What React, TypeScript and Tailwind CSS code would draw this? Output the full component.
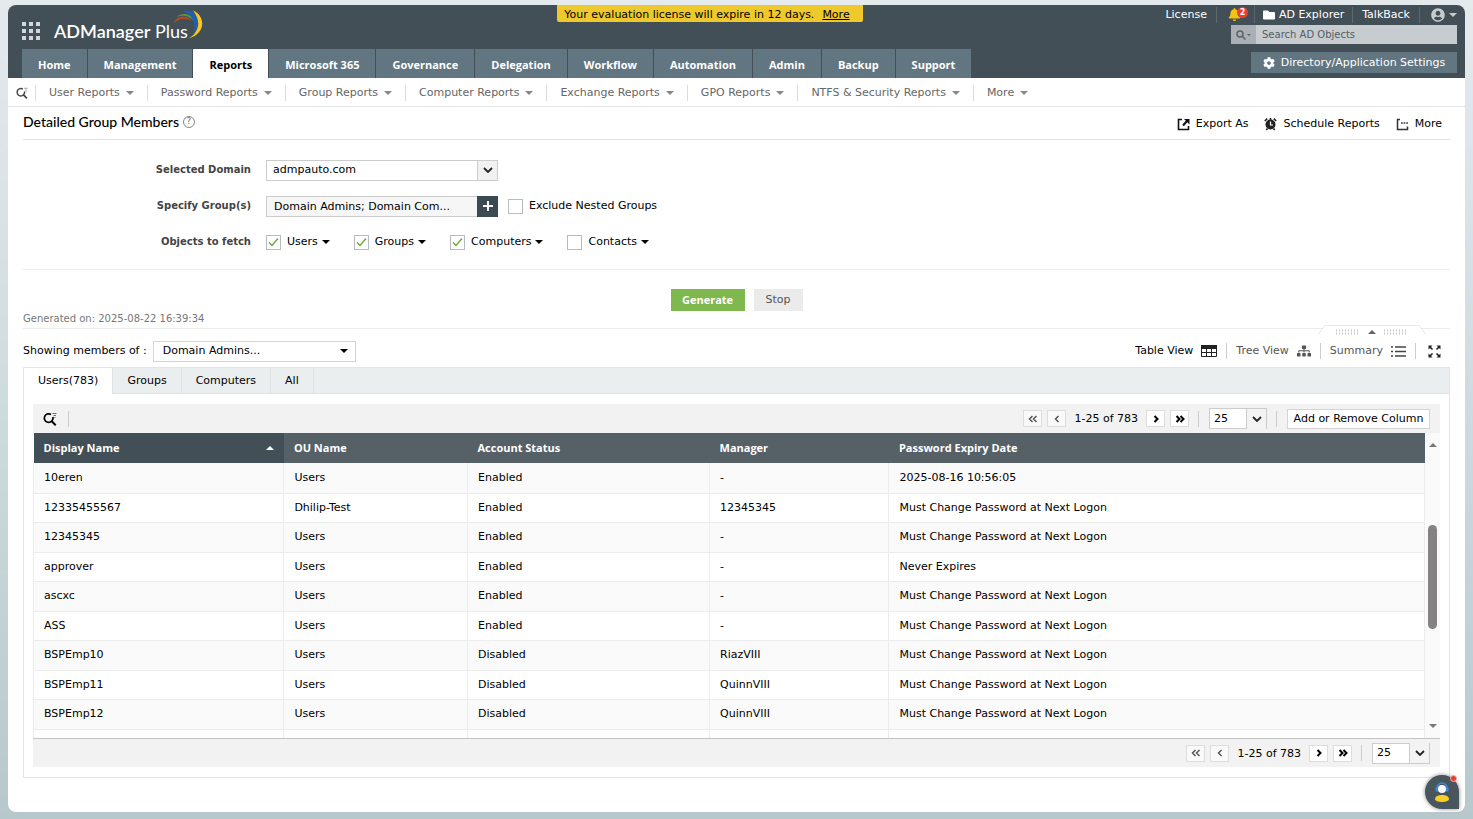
import { ReactNode } from "react";
import { FaBell, FaCog, FaFolder, FaSitemap, FaUserCircle } from "react-icons/fa";

const navTabs = [
  "Home",
  "Management",
  "Reports",
  "Microsoft 365",
  "Governance",
  "Delegation",
  "Workflow",
  "Automation",
  "Admin",
  "Backup",
  "Support",
];

const reportMenus = [
  "User Reports",
  "Password Reports",
  "Group Reports",
  "Computer Reports",
  "Exchange Reports",
  "GPO Reports",
  "NTFS & Security Reports",
  "More",
];

const objectTypes = [
  { name: "Users", checked: true },
  { name: "Groups", checked: true },
  { name: "Computers", checked: true },
  { name: "Contacts", checked: false },
];

const mustChange = "Must Change Password at Next Logon";

const rows = [
  ["10eren", "Users", "Enabled", "-", "2025-08-16 10:56:05"],
  ["12335455567", "Dhilip-Test", "Enabled", "12345345", mustChange],
  ["12345345", "Users", "Enabled", "-", mustChange],
  ["approver", "Users", "Enabled", "-", "Never Expires"],
  ["ascxc", "Users", "Enabled", "-", mustChange],
  ["ASS", "Users", "Enabled", "-", mustChange],
  ["BSPEmp10", "Users", "Disabled", "RiazVIII", mustChange],
  ["BSPEmp11", "Users", "Disabled", "QuinnVIII", mustChange],
  ["BSPEmp12", "Users", "Disabled", "QuinnVIII", mustChange],
];

function Caret({ className = "" }: { className?: string }) {
  return (
    <svg viewBox="0 0 8 4" className={`h-1 w-2 shrink-0 fill-current ${className}`} aria-hidden="true">
      <path d="M0 0h8L4 4z" />
    </svg>
  );
}

function Chevron() {
  return (
    <svg viewBox="0 0 10 6" className="h-1.5 w-2.5" fill="none" stroke="#222" strokeWidth="1.8" aria-hidden="true">
      <path d="M1 1l4 4 4-4" />
    </svg>
  );
}

function SearchFilterIcon({ className = "" }: { className?: string }) {
  return (
    <svg viewBox="0 0 14 14" className={className} fill="none" stroke="currentColor" aria-hidden="true">
      <path d="M8 2.500A4.300 4.300 0 1 0 9.700 7.500Q10.200 6.500 9.900 5" strokeWidth="1.700" />
      <path d="M8.500 9l4.200 4.200" strokeWidth="2" />
      <path d="M9.500 1.500h4M10.500 3.500h2.500M11.500 5.500h1" strokeWidth="1" opacity=".55" />
    </svg>
  );
}

function Logo() {
  return (
    <div className="relative flex h-full w-[149px] items-end pb-1.5">
      <span className="font-[Lato,sans-serif] text-[18px] leading-6 text-white">
        <span className="font-semibold">ADManager</span> Plus
      </span>
      <svg viewBox="0 0 30 31" className="absolute top-1 right-0 h-[31px] w-[30px]" aria-hidden="true">
        <path d="M0 14.500C4 6 14 6 18.500 12 13 8.500 6 8.500 0 14.500z" fill="#c0481f" />
        <path d="M3.500 8c7-6 17-3 19.500 7C18.500 8 12 5 3.500 8z" fill="#5d9732" />
        <path d="M9.500 2C18 0 26 6 25.500 14c-.5 5-2 7-4.500 10C23.500 14 19 5 9.500 2z" fill="#1d5fb8" />
        <path d="M20 1.500C33 7 33 25 15.500 29.500 27 23 28 11 20 1.500z" fill="#fbc71b" />
      </svg>
    </div>
  );
}

function HeaderLinks() {
  return (
    <div className="flex h-[18px] items-center pt-px text-white">
      <a href="#license" className="border-r border-[#5d676d] pr-[9px]">
        License
      </a>
      <button type="button" aria-label="Notifications" className="relative flex h-full w-[38px] items-center border-r border-[#5d676d] pl-[11px]">
        <FaBell className="size-[13px] text-[#f1c40f]" />
        <span className="absolute top-px right-1.5 flex size-[11px] items-center justify-center rounded-full bg-[#ee3b33] text-[8px] font-bold">
          2
        </span>
      </button>
      <a href="#explorer" className="flex items-center gap-1 border-r border-[#5d676d] px-2">
        <FaFolder className="size-3" />
        AD Explorer
      </a>
      <a href="#talkback" className="border-r border-[#5d676d] px-[9px]">
        TalkBack
      </a>
      <button type="button" aria-label="Account" className="flex items-center gap-1 pl-[11px] text-[#c6cbce]">
        <FaUserCircle className="size-3.5" />
        <Caret />
      </button>
    </div>
  );
}

function Header() {
  return (
    <header className="rounded-t-[8px] bg-[#434f57]">
      <div className="flex h-11 items-start">
        <div className="flex h-full w-[549px] shrink-0 items-center pl-3.5">
          <button type="button" aria-label="Apps" className="mt-2 mr-3.5 grid grid-cols-3 gap-[3px]">
            {Array.from({ length: 9 }, (_, i) => (
              <span key={i} className="size-1 bg-[#d3d7d9]" />
            ))}
          </button>
          <Logo />
        </div>
        <div className="flex h-[17px] w-[306px] shrink-0 items-center justify-center gap-2 rounded-b-[2px] bg-[#efc82b] pt-0.5 pr-1.5 text-black">
          Your evaluation license will expire in 12 days.
          <a href="#more" className="underline">
            More
          </a>
        </div>
        <div className="ml-auto flex flex-col items-end pr-2">
          <HeaderLinks />
          <form className="mt-0.5 flex h-[19px] w-[226px]">
            <button type="button" aria-label="Search" className="flex w-[25px] items-center justify-center gap-px bg-[#a9afb4] text-[#5b646b]">
              <svg viewBox="0 0 10 10" className="size-2.5" fill="none" stroke="currentColor" strokeWidth="1.500">
                <circle cx="4" cy="4" r="3" />
                <path d="M6.200 6.200L9.500 9.500" />
              </svg>
              <svg viewBox="0 0 4 2" className="h-0.5 w-1 fill-current">
                <path d="M0 0h4L2 2z" />
              </svg>
            </button>
            <input
              type="text"
              aria-label="Search AD Objects"
              placeholder="Search AD Objects"
              className="min-w-0 flex-1 bg-[#c7ccd0] px-1.5 text-[10px] placeholder:text-[#555e64]"
            />
          </form>
        </div>
      </div>
      <div className="flex h-[29px] justify-between pr-2 pl-3.5">
        <nav className="flex gap-px font-['Open_Sans',sans-serif] text-[11px] font-bold">
          {navTabs.map((tab) => (
            <a
              key={tab}
              href="#tab"
              className={`flex items-center px-4 pt-0.5 ${tab === "Reports" ? "bg-white text-black" : "bg-[#627681] text-white"}`}
            >
              {tab}
            </a>
          ))}
        </nav>
        <button type="button" className="mt-[3px] flex h-[21px] w-[206px] items-center justify-center gap-1.5 bg-[#627681] text-white">
          <FaCog className="size-3" />
          Directory/Application Settings
        </button>
      </div>
    </header>
  );
}

function ReportMenu() {
  return (
    <nav className="flex h-[29px] items-center border-b border-[#e6e6e6] pt-0.5 text-[#666]">
      <button type="button" aria-label="Search reports" className="flex h-4 w-[28px] items-center border-r border-[#ddd] pl-2 text-[#444]">
        <SearchFilterIcon className="size-3" />
      </button>
      {reportMenus.map((menu) => (
        <button
          key={menu}
          type="button"
          className="flex h-4 items-center gap-1.5 border-r border-[#ddd] px-[13px] last:border-0"
        >
          {menu}
          <Caret className="text-[#888]" />
        </button>
      ))}
    </nav>
  );
}

function TitleBar() {
  return (
    <div className="mx-[15px] flex h-[33px] items-center justify-between border-b border-[#e2e2e2]">
      <div className="flex items-center gap-1 pb-0.5">
        <h1 className="font-[Lato,sans-serif] text-sm font-medium text-black">Detailed Group Members</h1>
        <button type="button" aria-label="Help" className="flex size-3 items-center justify-center rounded-full border border-[#888] text-[8px] text-[#666]">
          ?
        </button>
      </div>
      <div className="flex items-center gap-4 pt-0.5 pr-2">
        <button type="button" className="flex items-center gap-1.5">
          <svg viewBox="0 0 13 13" className="size-[13px]" fill="none" stroke="#111" strokeWidth="1.600">
            <path d="M5 1.500H1.500v10h10V8" />
            <path d="M6 7.500L10 3" strokeWidth="2" />
            <path d="M7 1h5.500v5.500z" fill="#111" stroke="none" />
          </svg>
          Export As
        </button>
        <button type="button" className="flex items-center gap-1.5">
          <svg viewBox="0 0 13 14" className="h-3.5 w-[13px]">
            <circle cx="6.500" cy="7.500" r="5" fill="#222" />
            <path d="M.8 4l2.400-2.400M12.200 4L9.800 1.600M3.500 11.500L2.300 13M9.500 11.500l1.200 1.500M6.500 1v2" stroke="#222" strokeWidth="1.600" />
            <path d="M6.500 4.500V8H9" fill="none" stroke="#fff" strokeWidth="1.200" />
          </svg>
          Schedule Reports
        </button>
        <button type="button" className="flex items-center gap-1.5">
          <svg viewBox="0 0 13 13" className="size-[13px]" fill="none" stroke="#333" strokeWidth="1.500">
            <path d="M4 1.500H1.500v10H11.500V8.500" />
            <path d="M5 5h1.700M7.600 5h1.700M10.200 5h1.700" strokeWidth="1.700" />
          </svg>
          More
        </button>
      </div>
    </div>
  );
}

function Checkbox({ label, checked = false }: { label: string; checked?: boolean }) {
  return (
    <label className="flex items-center gap-1.5">
      <span className="grid size-[15px] place-items-center">
        <input
          type="checkbox"
          defaultChecked={checked}
          className="peer col-start-1 row-start-1 size-[15px] appearance-none border border-[#b5bdc1] bg-white"
        />
        <svg
          viewBox="0 0 11 10"
          className="pointer-events-none invisible col-start-1 row-start-1 h-2.5 w-[11px] peer-checked:visible"
          fill="none"
          stroke="#72ab3f"
          strokeWidth="1.500"
        >
          <path d="M1 5.500l3 3L10 1.500" />
        </svg>
      </span>
      {label}
    </label>
  );
}

function FormRow({ label, htmlFor, children }: { label: string; htmlFor?: string; children: ReactNode }) {
  return (
    <div className="flex h-9 items-center">
      <label htmlFor={htmlFor} className="w-[228px] text-right text-[10px] font-bold text-[#444]">
        {label}
      </label>
      <div className="ml-[15px] flex items-center">{children}</div>
    </div>
  );
}

function ReportForm() {
  return (
    <div className="mx-[15px] border-b border-[#ececec] pt-3 pb-[9px]">
      <FormRow label="Selected Domain" htmlFor="domain">
        <div className="relative h-[21px] w-[232px]">
          <select id="domain" className="h-full w-full appearance-none border border-[#ccc] bg-white pl-1.5">
            <option>admpauto.com</option>
          </select>
          <span className="pointer-events-none absolute inset-y-px right-px flex w-5 items-center justify-center border-l border-[#ccc] bg-[#f1f1f1]">
            <Chevron />
          </span>
        </div>
      </FormRow>
      <FormRow label="Specify Group(s)" htmlFor="groups">
        <input
          id="groups"
          type="text"
          readOnly
          value="Domain Admins; Domain Com..."
          className="h-[21px] w-[211px] border border-r-0 border-[#ccc] bg-[#f6f6f6] pl-[7px]"
        />
        <button type="button" aria-label="Add groups" className="mr-2.5 flex size-[21px] items-center justify-center bg-[#3c4a54]">
          <svg viewBox="0 0 10 10" className="size-2.5" stroke="#fff" strokeWidth="2">
            <path d="M5 0v10M0 5h10" />
          </svg>
        </button>
        <Checkbox label="Exclude Nested Groups" />
      </FormRow>
      <FormRow label="Objects to fetch">
        {objectTypes.map((type) => (
          <div key={type.name} className="mr-6 flex items-center gap-1">
            <Checkbox label={type.name} checked={type.checked} />
            <button type="button" aria-label={`${type.name} options`}>
              <Caret />
            </button>
          </div>
        ))}
      </FormRow>
    </div>
  );
}

function ViewSwitcher() {
  return (
    <div className="flex items-center pr-[9px] text-[#555]">
      <button type="button" className="flex items-center gap-2 pr-[9px] text-black">
        Table View
        <svg viewBox="0 0 16 12" className="h-3 w-4" fill="none" stroke="#222" strokeWidth="1">
          <path d="M.5.5h15v11H.5zM.5 7.500h15M5.500 3v9M10.500 3v9" />
          <path d="M0 0h16v4H0z" fill="#222" stroke="none" />
        </svg>
      </button>
      <button type="button" className="flex h-4 items-center gap-2 border-l border-[#ccc] px-[9px]">
        Tree View
        <FaSitemap className="size-3.5" />
      </button>
      <button type="button" className="flex h-4 items-center gap-2 border-l border-[#ccc] px-[9px]">
        Summary
        <svg viewBox="0 0 15 11" className="h-[11px] w-[15px]" stroke="#444" strokeWidth="1.500">
          <path d="M0 1h2M4 1h11M0 5.500h2M4 5.500h11M0 10h2M4 10h11" />
        </svg>
      </button>
      <button type="button" aria-label="Full screen" className="flex h-4 items-center border-l border-[#ccc] pl-3">
        <svg viewBox="0 0 13 13" className="size-[13px]" fill="#222" stroke="#222" strokeWidth="1.600">
          <path d="M.5.500h4l-4 4zM12.500.500v4l-4-4zM.5 12.500v-4l4 4zM12.500 12.500h-4l4-4z" stroke="none" />
          <path d="M2 2l2.500 2.500M11 2L8.500 4.500M2 11l2.500-2.500M11 11L8.500 8.500" />
        </svg>
      </button>
    </div>
  );
}

function CollapseHandle() {
  return (
    <button type="button" aria-label="Collapse" className="absolute -top-1 right-6 h-2.5 w-[108px]">
      <svg viewBox="0 0 108 10" className="h-2.5 w-[108px]" fill="#fff">
        <path d="M0 9.500L7 .5h94l7 9" stroke="#e6e6e6" />
        <path d="M18 5.500h23M18 8.500h23M66 5.500h23M66 8.500h23" stroke="#c4c4c4" strokeWidth="2" strokeDasharray="1 2" />
        <path d="M50 9l4-4 4 4z" fill="#666" />
      </svg>
    </button>
  );
}

function PageButton({ label, symbol, disabled = false }: { label: string; symbol: string; disabled?: boolean }) {
  return (
    <button
      type="button"
      aria-label={label}
      disabled={disabled}
      className="flex h-[17px] w-[19px] items-center justify-center border border-[#ddd] bg-white disabled:bg-[#f9f9f9] disabled:text-[#555]"
    >
      <svg viewBox="0 0 10 8" className="h-2 w-2.5" fill="none" stroke="currentColor" strokeWidth={disabled ? 1.5 : 2}>
        <path d={symbol} />
      </svg>
    </button>
  );
}

function Pager() {
  return (
    <div className="flex items-center gap-[5px]">
      <PageButton label="First page" symbol="M4.500 1l-3 3 3 3M8.500 1l-3 3 3 3" disabled />
      <PageButton label="Previous page" symbol="M6.500 1l-3 3 3 3" disabled />
      <span className="px-[3px] pt-px">1-25 of 783</span>
      <PageButton label="Next page" symbol="M3.500 1l3 3-3 3" />
      <PageButton label="Last page" symbol="M1.500 1l3 3-3 3M5.500 1l3 3-3 3" />
      <div className="relative ml-1 flex h-4 items-center border-l border-[#ccc] pl-2.5">
        <select aria-label="Rows per page" className="h-[21px] w-[58px] appearance-none border border-[#ccc] bg-white pl-1">
          <option>25</option>
        </select>
        <span className="pointer-events-none absolute -top-0.5 right-px -bottom-0.5 flex w-5 items-center justify-center border-l border-[#ccc] bg-[#f3f3f3]">
          <Chevron />
        </span>
      </div>
    </div>
  );
}

function MembersTable() {
  const cols = ["Display Name", "OU Name", "Account Status", "Manager", "Password Expiry Date"];

  return (
    <div className="flex h-[306px] overflow-hidden border-b border-[#c4c4c4]">
      <div className="min-w-0 flex-1 overflow-hidden">
        <table className="w-full table-fixed border-collapse text-left">
          <colgroup>
            <col className="w-[18%]" />
            <col className="w-[13.200%]" />
            <col className="w-[17.400%]" />
            <col className="w-[12.900%]" />
            <col />
          </colgroup>
          <thead>
            <tr className="h-[30px] bg-[#566067] text-white">
              {cols.map((col, i) => (
                <th key={col} className={`p-0 px-2.5 font-['Open_Sans',sans-serif] font-bold ${i === 0 ? "bg-[#434f57]" : ""}`}>
                  <div className="flex items-center justify-between">
                    {col}
                    {i === 0 && <Caret className="rotate-180" />}
                  </div>
                </th>
              ))}
            </tr>
          </thead>
          <tbody>
            {rows.map((row) => (
              <tr key={row[0]} className="border-b border-[#ececec] first:h-[31px] odd:h-[30px] odd:bg-[#fafafa] even:h-[29px]">
                {row.map((cell, i) => (
                  <td key={i} className="border-x border-[#ececec] p-0 px-2.5">
                    {cell}
                  </td>
                ))}
              </tr>
            ))}
            <tr className="h-[30px]">
              {cols.map((col) => (
                <td key={col} className="border-x border-[#ececec]" />
              ))}
            </tr>
          </tbody>
        </table>
      </div>
      <div className="flex w-[15px] flex-col items-center bg-[#fafafa] pt-2.5 pb-2.5 text-[#777]">
        <Caret className="rotate-180" />
        <span className="mt-[78px] h-[104px] w-[9px] rounded-full bg-[#858283]" />
        <Caret className="mt-auto" />
      </div>
    </div>
  );
}

function Results() {
  return (
    <section className="mx-[15px]">
      <div className="relative flex h-[39px] items-center justify-between border-t border-[#ececec] pt-1.5">
        <CollapseHandle />
        <div className="flex items-center gap-1.5">
          <label htmlFor="members">Showing members of :</label>
          <div className="relative h-[21px] w-[203px]">
            <select id="members" className="h-full w-full appearance-none border border-[#d5d5d5] bg-white pl-[9px]">
              <option>Domain Admins...</option>
            </select>
            <Caret className="pointer-events-none absolute top-2 right-2" />
          </div>
        </div>
        <ViewSwitcher />
      </div>
      <div className="border border-[#e2e4e5]">
        <div className="flex h-[26px] bg-[#eaeeef]">
          {["Users(783)", "Groups", "Computers", "All"].map((tab, i) => (
            <button
              key={tab}
              type="button"
              className={`border-r border-[#e0e3e4] px-3.5 ${i === 0 ? "bg-white" : "border-b"}`}
            >
              {tab}
            </button>
          ))}
          <span className="flex-1 border-b border-[#e0e3e4]" />
        </div>
        <div className="px-[9px] py-2.5">
          <div className="flex h-[29px] items-center justify-between bg-[#f2f2f2] px-2.5">
            <button type="button" aria-label="Search members" className="flex h-4 w-[26px] items-center border-r border-[#ccc]">
              <SearchFilterIcon className="size-3.5" />
            </button>
            <div className="flex items-center gap-[9px]">
              <Pager />
              <div className="flex h-4 items-center border-l border-[#ccc] pl-2.5">
                <button type="button" className="h-5 w-[143px] border border-[#d5d5d5] bg-white">
                  Add or Remove Column
                </button>
              </div>
            </div>
          </div>
          <MembersTable />
          <div className="flex h-7 items-center justify-end bg-[#f2f2f2] pr-2.5">
            <Pager />
          </div>
        </div>
      </div>
    </section>
  );
}

function SupportButton() {
  return (
    <button
      type="button"
      aria-label="Support chat"
      className="fixed right-3.5 bottom-2.5 flex size-[34px] items-center justify-center rounded-full rounded-br-[6px] bg-[#4a565e] shadow-[0_0_4px_#888]"
    >
      <svg viewBox="0 0 18 22" className="h-[22px] w-[18px]">
        <path d="M4 9V7a5 5 0 0 1 10 0v2" fill="none" stroke="#3b8ddb" strokeWidth="1.600" />
        <circle cx="9" cy="8" r="4" fill="#fff" />
        <path d="M2.500 6.500H5v4H2.500zM13 6.500h2.500v4H13z" fill="#3b8ddb" />
        <path d="M2 18c0-5.500 14-5.500 14 0 0 4-14 4-14 0z" fill="#f8cf24" />
      </svg>
      <span className="absolute top-0 right-0.5 size-[7px] rounded-full border border-[#e9b8a0] bg-[#f03a2e]" />
    </button>
  );
}

export default function App() {
  return (
    <div className="min-h-screen bg-linear-to-b from-[#e5eaed] via-[#cedbde] to-[#b7c8cd] px-2 pt-[5px] pb-[7px] font-['DejaVu_Sans',sans-serif] text-[11px] leading-4 text-black">
      <main className="rounded-[8px] bg-white pb-[34px]">
        <Header />
        <ReportMenu />
        <TitleBar />
        <ReportForm />
        <div className="mx-[15px] flex h-[58px] flex-col">
          <div className="mt-[19px] flex justify-center gap-[9px]">
            <button type="button" className="h-[22px] w-[74px] bg-[#7fb84f] font-['Open_Sans',sans-serif] font-bold text-white">
              Generate
            </button>
            <button type="button" className="h-[22px] w-[49px] bg-[#ebebeb] text-[#555]">
              Stop
            </button>
          </div>
          <p className="text-[10px] text-[#777]">Generated on: 2025-08-22 16:39:34</p>
        </div>
        <Results />
      </main>
      <SupportButton />
    </div>
  );
}
